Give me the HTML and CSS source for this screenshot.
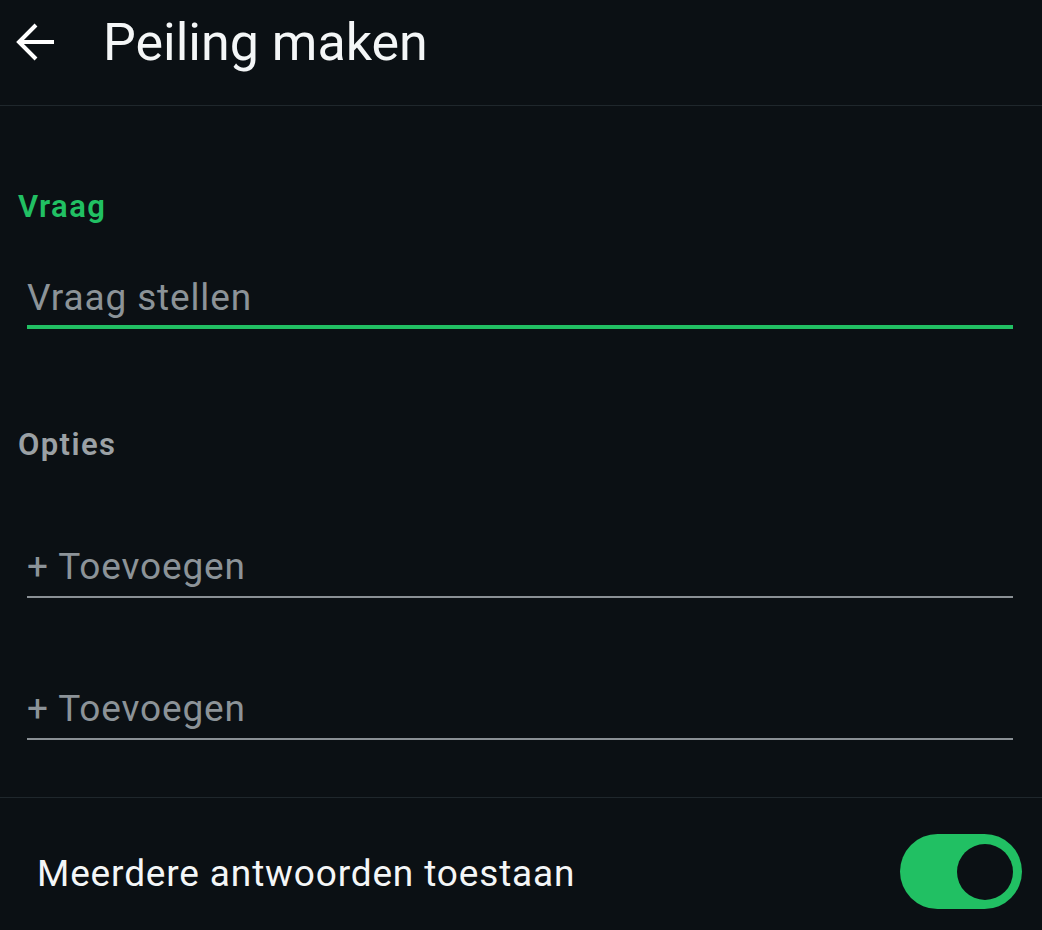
FILE: index.html
```html
<!DOCTYPE html>
<html lang="nl">
<head>
<meta charset="utf-8">
<title>Peiling maken</title>
<link rel="stylesheet" href="styles.css">
</head>
<body>
<div class="screen">
  <header class="appbar">
    <svg class="back" width="40" height="40" viewBox="0 0 40 40" aria-hidden="true">
      <path d="M3 20 H38 M20 3 L3 20 L20 37" fill="none" stroke="#ffffff" stroke-width="4" stroke-linecap="butt" stroke-linejoin="miter"/>
    </svg>
    <h1 class="title">Peiling maken</h1>
  </header>

  <section class="content">
    <div class="label label-active">Vraag</div>
    <div class="field field-active">Vraag stellen</div>

    <div class="label label-opties">Opties</div>
    <div class="field field-opt">+ Toevoegen</div>
    <div class="field field-opt field-second">+ Toevoegen</div>
  </section>

  <div class="divider"></div>

  <div class="setting">
    <span class="setting-text">Meerdere antwoorden toestaan</span>
    <div class="toggle"><div class="knob"></div></div>
  </div>
</div>
</body>
</html>
```

FILE: styles.css
```css
html, body {
  margin: 0;
  padding: 0;
  background: #0b1014;
}
body {
  font-family: Roboto, "Noto Sans", "Liberation Sans", sans-serif;
  color: #e9edef;
}
.screen {
  width: 1042px;
  height: 930px;
  overflow: hidden;
  background: #0b1014;
}
.appbar {
  box-sizing: border-box;
  height: 106px;
  display: flex;
  align-items: flex-start;
  padding: 13px 0 0 16px;
  border-bottom: 1px solid #1f272c;
}
.back {
  margin-top: 9px;
  flex: none;
}
.title {
  margin: 0 0 0 47px;
  font-size: 52px;
  line-height: 60px;
  font-weight: 400;
  color: #f4f6f7;
}
.content {
  display: flex;
  flex-direction: column;
}
.label {
  margin-left: 18px;
  font-size: 31px;
  line-height: 36px;
  font-weight: 600;
  letter-spacing: 1.4px;
}
.label-active {
  color: #21c063;
  margin-top: 83px;
}
.label-opties {
  color: #9ba1a5;
  margin-top: 98px;
}
.field {
  margin: 0 29px 0 27px;
  font-size: 37px;
  line-height: 42px;
  letter-spacing: 0.85px;
  color: #8c9398;
}
.field-active {
  margin-top: 52px;
  padding-bottom: 6px;
  border-bottom: 4px solid #21c063;
}
.field-opt {
  margin-top: 83px;
  padding-bottom: 8px;
  border-bottom: 2px solid #8a9095;
}
.field.field-second {
  margin-top: 90px;
}
.divider {
  margin-top: 57px;
  height: 1px;
  background: #1f272c;
}
.setting {
  display: flex;
  align-items: center;
  justify-content: space-between;
  padding: 36px 20px 0 37px;
}
.setting-text {
  font-size: 37px;
  line-height: 42px;
  letter-spacing: 0.85px;
  color: #f4f6f7;
  position: relative;
  top: 2px;
}
.toggle {
  box-sizing: border-box;
  width: 122px;
  height: 75px;
  border-radius: 38px;
  background: #21c063;
  display: flex;
  align-items: center;
  justify-content: flex-end;
  padding-right: 9px;
}
.knob {
  width: 56px;
  height: 56px;
  border-radius: 50%;
  background: #0b1014;
}
```
